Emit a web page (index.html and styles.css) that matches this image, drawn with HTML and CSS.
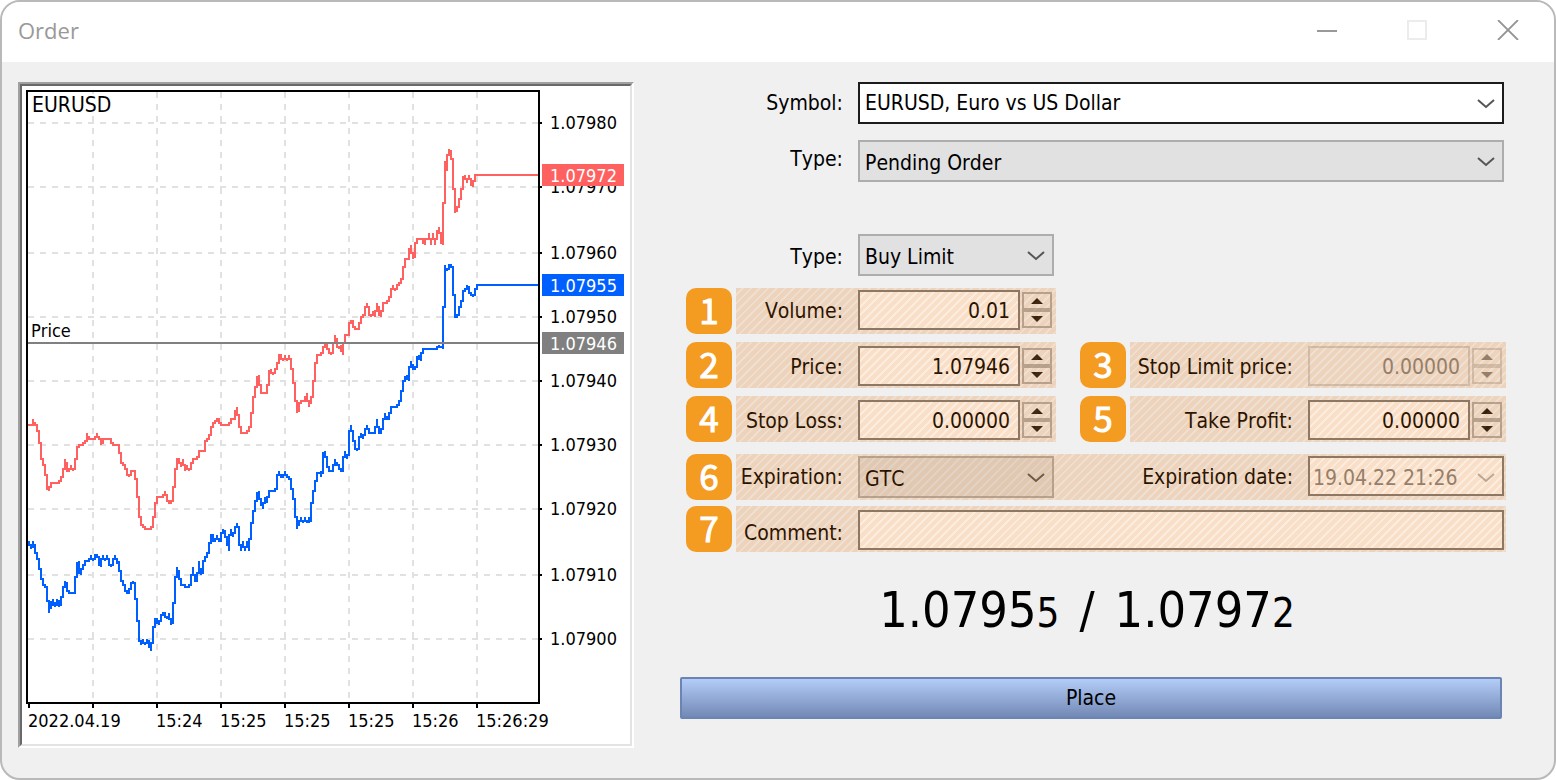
FILE: index.html
```html
<!DOCTYPE html>
<html lang="en">
<head>
<meta charset="utf-8">
<title>Order</title>
<link rel="stylesheet" href="styles.css">
</head>
<body>
<div class="window">
  <header class="titlebar">
    <h1 class="title">Order</h1>
    <div class="window-buttons">
      <button type="button" class="window-button" aria-label="Minimize"><svg width="20" height="20" viewBox="0 0 20 20"><path d="M0 11H20" stroke="#999" stroke-width="2"/></svg></button>
      <button type="button" class="window-button" aria-label="Maximize" disabled><svg width="20" height="20" viewBox="0 0 20 20"><rect x="1" y="1" width="18" height="18" fill="none" stroke="#ececec" stroke-width="2"/></svg></button>
      <button type="button" class="window-button" aria-label="Close"><svg width="22" height="20" viewBox="0 0 22 20"><path d="M1 0L21 20M21 0L1 20" stroke="#959595" stroke-width="1.8"/></svg></button>
    </div>
  </header>
  <main class="content">
    <section class="chart-panel" aria-label="EURUSD tick chart">
      <svg class="chart" width="608" height="658" viewBox="22 86 608 658">
        <g class="grid">
          <path d="M93 92V702M157 92V702M221 92V702M285 92V702M349 92V702M413 92V702M477 92V702"/>
          <path d="M28 123H538M28 187H538M28 253H538M28 317H538M28 381H538M28 445H538M28 509H538M28 575H538M28 639H538"/>
        </g>
        <rect x="31" y="94" width="80" height="21" fill="#fff"/>
        <!-- Series use three units per pixel -->
        <svg x="0" y="0" width="640" height="744" viewBox="0 0 1920 2232">
          <g class="series bid">
            <polyline transform="translate(30 1140)" points="54,488 57,482 57,495 60,495 63,507 66,490 69,482 72,498 75,500 75,514 81,516 81,532 87,538 87,564 93,566 93,592 99,596 99,608 105,612 105,620 111,622 111,658 117,662 117,700 120,660 123,688 126,664 129,656 132,680 135,680 138,668 141,656 144,668 147,682 150,664 153,650 159,648 159,618 165,616 165,602 171,612 171,626 177,630 177,638 189,638 195,630 195,590 201,588 201,552 207,542 207,570 213,586 213,566 219,566 219,554 225,552 225,542 237,542 243,524 249,542 255,524 261,524 264,536 267,546 273,562 273,542 279,524 285,542 291,524 297,542 303,560 309,542 315,524 321,548 327,542 327,570 333,574 333,603 339,605 345,622 351,638 357,638 363,612 369,602 375,614 375,654 381,656 381,718 387,722 387,778 393,780 393,796 399,778 405,796 411,776 414,788 417,788 423,815 423,790 429,780 429,740 435,738 435,716 441,718 447,736 453,710 459,698 465,698 471,718 477,698 483,736 489,722 489,668 495,664 495,592 501,590 501,560 507,576 507,592 513,602 525,618 531,622 537,620 543,610 543,584 549,582 549,560 555,604 561,594 561,578 567,574 567,542 573,586 579,566 579,544 585,542 585,530 591,526 591,516 597,514 597,486 603,484 603,464 609,464 609,482 615,482 621,464 627,484 633,484"/>
            <polyline transform="translate(660 960)" points="3,664 3,642 9,626 15,640 21,656 27,690 27,656 33,628 39,648 45,628 51,608 57,632 57,656 63,690 69,662 75,690 81,662 87,690 87,656 93,652 93,606 99,604 99,572 105,570 105,540 111,538 111,524 117,512 117,532 123,540 129,568 135,530 141,550 147,514 165,514 171,496 171,470 177,452 183,470 189,470 195,452 201,470 207,472 213,482 213,502 219,506 219,530 225,534 225,586 231,590 231,628 237,600 237,616 243,590 249,610 255,590 261,606 267,590 267,610 273,588 273,546 279,544 279,512 285,510 285,482 291,478 291,462 303,452 303,472 309,440 309,404 315,392 315,408 321,410 321,436 327,438 327,454 339,454 345,416 351,434 357,436 363,452 369,454 369,422 375,392 381,416 387,394 387,344 393,314 393,334 399,334 399,356 405,360 405,382 411,394 417,380 417,356 423,338 429,356 435,332 441,316 447,338 465,338 471,296 477,340 483,338 489,312 495,278 501,296 507,296 513,262 531,262 537,244 543,242 543,212 549,208 549,182"/>
            <polyline transform="translate(1080 390)" points="129,780 129,752 135,744 141,734 147,754 147,720 153,690 159,716 165,716 171,700 171,684 177,676 183,694 183,674 189,656 231,656 237,644 249,658 249,528 255,524 255,404 261,424 267,404 273,404 279,414 279,490 285,492 285,562 291,562 297,548 297,530 303,526 303,510 309,508 309,484 315,480 318,464 324,468 327,482 333,488 339,500 345,484 351,465 534,465"/>
          </g>
          <g class="series ask">
            <polyline transform="translate(30 1140)" points="54,134 66,134 69,116 72,134 78,134 81,150 87,150 87,186 93,188 93,235 99,237 99,255 105,257 105,282 111,284 111,320 117,333 120,309 147,309 150,291 159,291 159,264 165,262 165,236 168,255 171,270 177,270 183,255 189,272 195,262 195,237 201,235 201,205 207,195 219,195 222,185 228,176 231,158 237,176 255,176 261,158 264,174 270,176 273,193 279,176 303,176 309,194 327,194 327,214 333,216 333,245 339,250 345,262 351,272 357,290 363,272 375,272 375,292 381,295 381,348 387,350 387,408 393,410 393,428 399,432 405,446 423,446 429,434 429,408 435,405 435,366 441,366 441,351 459,351 465,333 471,350 477,368 483,368 489,358 489,320 495,316 495,265 501,263 501,237 507,237 513,260 519,237 525,272 531,255 537,272 543,255 549,237 558,237 564,220 567,212 585,212 585,182 591,178 597,176 597,166 603,164 603,145 609,136 615,125 621,118 627,118 633,134"/>
            <polyline transform="translate(660 960)" points="0,314 27,314 33,297 45,297 45,280 51,260 51,282 57,284 57,316 63,320 63,339 81,339 87,318 93,314 93,280 99,276 99,230 105,228 105,200 111,196 111,176 117,164 117,190 123,194 123,210 129,218 141,218 141,194 147,190 147,158 153,147 159,164 165,148 171,146 171,128 177,122 177,104 183,104 189,123 195,104 201,123 207,104 213,120 213,142 219,144 219,182 225,186 225,240 231,244 231,280 237,264 237,254 243,243 255,243 261,218 267,262 273,236 279,218 279,182 285,178 285,128 291,124 291,104 303,104 309,88 315,74 321,74 327,92 333,106 339,94 345,42 351,68 357,86 363,74 369,104 369,70 375,64 375,44 387,42 387,8 393,2 399,2 399,14 405,26 417,26 417,6 420,4"/>
            <polyline transform="translate(1080 390)" points="0,574 3,558 9,558 15,540 21,518 27,540 33,560 39,540 45,560 51,518 57,540 63,560 69,520 81,518 87,504 93,486 99,464 105,482 111,466 117,464 123,444 129,438 129,412 135,408 135,388 147,386 147,368 153,344 159,386 165,374 165,350 171,326 189,326 195,344 207,308 213,344 219,308 225,344 231,308 237,290 243,324 249,346 249,216 255,214 255,90 261,120 261,88 267,56 273,70 273,84 279,86 279,174 285,176 285,250 291,236 297,222 297,206 303,202 303,176 309,172 309,144 315,134 321,158 327,134 333,156 339,172 345,134 534,134"/>
          </g>
        </svg>
        <path d="M28 343H538" class="price-line"/>
        <path class="frame" d="M27 91H539V703H27ZM540 123H542M540 187H542M540 253H542M540 317H542M540 381H542M540 445H542M540 509H542M540 575H542M540 639H542M29 704V708M93 704V708M157 704V708M221 704V708M285 704V708M349 704V708M413 704V708M477 704V708"/>
        <text class="pair" x="32" y="112">EURUSD</text>
        <text x="31" y="337">Price</text>
        <g>
          <text x="550" y="129">1.07980</text>
          <text x="550" y="193">1.07970</text>
          <text x="550" y="259">1.07960</text>
          <text x="550" y="323">1.07950</text>
          <text x="550" y="387">1.07940</text>
          <text x="550" y="451">1.07930</text>
          <text x="550" y="515">1.07920</text>
          <text x="550" y="581">1.07910</text>
          <text x="550" y="645">1.07900</text>
        </g>
        <g>
          <text x="28" y="727">2022.04.19</text>
          <text x="156" y="727">15:24</text>
          <text x="220" y="727">15:25</text>
          <text x="284" y="727">15:25</text>
          <text x="348" y="727">15:25</text>
          <text x="412" y="727">15:26</text>
          <text x="476" y="727">15:26:29</text>
        </g>
        <g class="tags">
          <rect x="542" y="164" width="82" height="22" fill="#ff6060"/>
          <rect x="542" y="274" width="82" height="22" fill="#0060ff"/>
          <rect x="542" y="332" width="82" height="22" fill="#808080"/>
          <text x="550" y="182">1.07972</text>
          <text x="550" y="292">1.07955</text>
          <text x="550" y="350">1.07946</text>
        </g>
      </svg>
    </section>

    <form class="order">
      <div class="row plain">
        <label class="label" for="symbol">Symbol:</label>
        <div class="select wide">
          <select id="symbol" class="control focused"><option>EURUSD, Euro vs US Dollar</option></select>
          <svg class="chevron" width="18" height="10" viewBox="0 0 18 10"><path d="M1 1L9 8L17 1"/></svg>
        </div>
      </div>
      <div class="row plain order-type">
        <label class="label raised" for="order-type">Type:</label>
        <div class="select wide">
          <select id="order-type" class="control"><option>Pending Order</option></select>
          <svg class="chevron" width="18" height="10" viewBox="0 0 18 10"><path d="M1 1L9 8L17 1"/></svg>
        </div>
      </div>
      <div class="row plain pending-type">
        <label class="label" for="pending-type">Type:</label>
        <div class="select">
          <select id="pending-type" class="control"><option>Buy Limit</option></select>
          <svg class="chevron" width="18" height="10" viewBox="0 0 18 10"><path d="M1 1L9 8L17 1"/></svg>
        </div>
      </div>

      <div class="row volume">
        <span class="badge">1</span>
        <div class="band">
          <label class="label" for="volume">Volume:</label>
          <input id="volume" class="number" type="text" value="0.01">
          <div class="spinner">
            <button type="button" class="step" aria-label="Increase volume"><svg width="12" height="6" viewBox="0 0 12 6"><path d="M6 0L12 6H0Z"/></svg></button>
            <button type="button" class="step" aria-label="Decrease volume"><svg width="12" height="6" viewBox="0 0 12 6"><path d="M0 0H12L6 6Z"/></svg></button>
          </div>
        </div>
      </div>

      <div class="row">
        <span class="badge">2</span>
        <div class="band low">
          <label class="label" for="price">Price:</label>
          <input id="price" class="number" type="text" value="1.07946">
          <div class="spinner">
            <button type="button" class="step" aria-label="Increase price"><svg width="12" height="6" viewBox="0 0 12 6"><path d="M6 0L12 6H0Z"/></svg></button>
            <button type="button" class="step" aria-label="Decrease price"><svg width="12" height="6" viewBox="0 0 12 6"><path d="M0 0H12L6 6Z"/></svg></button>
          </div>
        </div>
        <span class="badge second">3</span>
        <div class="band fill low">
          <label class="label grow" for="stop-limit">Stop Limit price:</label>
          <input id="stop-limit" class="number" type="text" value="0.00000" disabled>
          <div class="spinner">
            <button type="button" class="step" aria-label="Increase stop limit price" disabled><svg width="12" height="6" viewBox="0 0 12 6"><path d="M6 0L12 6H0Z"/></svg></button>
            <button type="button" class="step" aria-label="Decrease stop limit price" disabled><svg width="12" height="6" viewBox="0 0 12 6"><path d="M0 0H12L6 6Z"/></svg></button>
          </div>
        </div>
      </div>

      <div class="row">
        <span class="badge">4</span>
        <div class="band low">
          <label class="label" for="stop-loss">Stop Loss:</label>
          <input id="stop-loss" class="number" type="text" value="0.00000">
          <div class="spinner">
            <button type="button" class="step" aria-label="Increase stop loss"><svg width="12" height="6" viewBox="0 0 12 6"><path d="M6 0L12 6H0Z"/></svg></button>
            <button type="button" class="step" aria-label="Decrease stop loss"><svg width="12" height="6" viewBox="0 0 12 6"><path d="M0 0H12L6 6Z"/></svg></button>
          </div>
        </div>
        <span class="badge second">5</span>
        <div class="band fill low">
          <label class="label grow" for="take-profit">Take Profit:</label>
          <input id="take-profit" class="number" type="text" value="0.00000">
          <div class="spinner">
            <button type="button" class="step" aria-label="Increase take profit"><svg width="12" height="6" viewBox="0 0 12 6"><path d="M6 0L12 6H0Z"/></svg></button>
            <button type="button" class="step" aria-label="Decrease take profit"><svg width="12" height="6" viewBox="0 0 12 6"><path d="M0 0H12L6 6Z"/></svg></button>
          </div>
        </div>
      </div>

      <div class="row expiry">
        <span class="badge">6</span>
        <div class="band fill">
          <label class="label" for="expiration">Expiration:</label>
          <div class="select">
            <select id="expiration" class="control"><option>GTC</option></select>
            <svg class="chevron" width="18" height="10" viewBox="0 0 18 10"><path d="M1 1L9 8L17 1"/></svg>
          </div>
          <label class="label grow" for="expiration-date">Expiration date:</label>
          <div class="select date">
            <select id="expiration-date" class="control" disabled><option>19.04.22 21:26</option></select>
            <svg class="chevron" width="18" height="10" viewBox="0 0 18 10"><path d="M1 1L9 8L17 1"/></svg>
          </div>
        </div>
      </div>

      <div class="row comment">
        <span class="badge">7</span>
        <div class="band fill low">
          <label class="label" for="comment">Comment:</label>
          <input id="comment" class="text" type="text">
        </div>
      </div>

      <p class="quote"><span>1.0795<span class="pip">5</span></span> <span>/</span> <span>1.0797<span class="pip">2</span></span></p>
      <button type="submit" class="place">Place</button>
    </form>
  </main>
</div>
<script src="chart.js"></script>
</body>
</html>
```
FILE: styles.css
```css
* {
  box-sizing: border-box;
}

body {
  margin: 0;
  background: #fff;
  color: #000;
  font: 21px/26px "DejaVu Sans Condensed", "DejaVu Sans", sans-serif;
  font-kerning: none;
}

button,
input,
select {
  margin: 0;
  font: inherit;
  color: inherit;
  border-radius: 0;
}

.window {
  min-height: 100vh;
  border: 2px solid #b9b9b9;
  border-radius: 20px;
  overflow: hidden;
  background: #f0f0f0;
}

.titlebar {
  display: flex;
  align-items: center;
  justify-content: space-between;
  height: 60px;
  padding: 0 35px 4px 16px;
  background: #fff;
}

.title {
  margin: 0;
  font: 400 22px/32px "Open Sans", "Noto Sans", sans-serif;
  color: #999;
}

.window-buttons {
  display: flex;
  align-items: center;
  gap: 70px;
}

.window-button {
  display: flex;
  padding: 0;
  border: 0;
  background: none;
}

.content {
  display: flex;
  align-items: flex-start;
  gap: 46px;
  padding: 20px 48px 20px 16px;
}

.chart-panel {
  flex: none;
  border: 2px solid;
  border-color: #a0a0a0 #fff #fff #a0a0a0;
}

.chart {
  display: block;
  box-sizing: content-box;
  border: 2px solid;
  border-color: #696969 #e3e3e3 #e3e3e3 #696969;
  background: #fff;
  font-size: 18px;
}

.grid path {
  fill: none;
  stroke: #e1e1e1;
  stroke-width: 2;
  stroke-dasharray: 6 6;
}

.series {
  fill: none;
  stroke-width: 6;
  stroke-linecap: square;
  shape-rendering: crispEdges;
}

.bid {
  stroke: #0060ff;
}

.ask {
  stroke: #ff6060;
}

.price-line {
  stroke: #808080;
  stroke-width: 2;
}

.frame {
  fill: none;
  stroke: #000;
  stroke-width: 2;
}

.pair {
  font-size: 21px;
}

.tags text {
  fill: #fff;
}

.order {
  flex: 1;
  display: flex;
  flex-direction: column;
}

.row {
  display: flex;
  gap: 4px;
  margin-bottom: 8px;
  padding-left: 6px;
}

.plain {
  gap: 0;
  margin-bottom: 16px;
  padding-left: 56px;
  padding-right: 2px;
}

.order-type {
  margin-bottom: 52px;
}

.pending-type {
  margin-bottom: 12px;
}

.expiry {
  margin-top: 4px;
  margin-bottom: 6px;
}

.badge {
  display: flex;
  flex: none;
  align-items: center;
  justify-content: center;
  width: 46px;
  height: 46px;
  padding-bottom: 4px;
  border-radius: 10px;
  background: #f49b22;
  color: #fff;
  font: 400 35px/40px "Noto Sans CJK JP", "Noto Sans", sans-serif;
  -webkit-text-stroke: 1px #fff;
}

.second {
  margin-left: 20px;
}

.band {
  position: relative;
  display: flex;
  align-items: flex-start;
  width: 320px;
  height: 46px;
  padding-top: 2px;
}

.low {
  padding-top: 4px;
}

.band::after {
  content: "";
  position: absolute;
  inset: 0;
  pointer-events: none;
  background: repeating-linear-gradient(135deg, rgba(227, 109, 0, 0.22) 0 4px, rgba(227, 109, 0, 0.13) 4px 6px);
}

.fill {
  flex: 1;
  width: auto;
}

.label {
  flex: none;
  width: 122px;
  padding: 8px 15px 6px 0;
  text-align: right;
  white-space: nowrap;
}

.raised {
  padding-top: 6px;
}

.pending-type .label,
.comment .label {
  padding-top: 10px;
}

.grow {
  flex: 1;
}

.select {
  position: relative;
  flex: none;
  width: 196px;
}

.wide {
  flex: 1;
}

.control {
  appearance: none;
  display: block;
  width: 100%;
  height: 42px;
  padding: 3px 40px 0 5px;
  border: 2px solid #adadad;
  background: #e1e1e1;
  opacity: 1;
}

.focused {
  padding-top: 0;
  border-color: #1c1c1c;
  background: #fff;
}

.chevron {
  position: absolute;
  top: 17px;
  right: 9px;
  fill: none;
  stroke: #555;
  stroke-width: 2;
  pointer-events: none;
}

.date {
  margin-right: 2px;
}

.date .control {
  height: 40px;
  padding-left: 3px;
  padding-right: 20px;
  border-color: #7a7a7a;
  background: #fff;
  color: #838383;
}

.date .chevron {
  stroke: #b4b4b4;
}

.number,
.text {
  width: 162px;
  height: 40px;
  padding: 0 8px;
  border: 2px solid #7a7a7a;
  background: #fff;
}

.number {
  padding-top: 2px;
  text-align: right;
}

.number:disabled {
  border-color: #ccc;
  background: #f0f0f0;
  color: #838383;
}

.text {
  flex: 1;
  margin-right: 2px;
}

.spinner {
  display: flex;
  flex-direction: column;
  margin: 2px 4px 0 2px;
}

.step {
  display: flex;
  align-items: center;
  justify-content: center;
  width: 30px;
  height: 18px;
  padding: 0;
  border: 2px solid #adadad;
  background: #f0f0f0;
}

.step svg {
  fill: #151515;
}

.step:disabled {
  border-color: #ccc;
}

.step:disabled svg {
  fill: #838383;
}

.quote {
  display: flex;
  align-items: baseline;
  justify-content: center;
  gap: 20px;
  margin: 18px 0 0;
  padding-right: 12px;
  font-size: 50px;
  line-height: 64px;
}

.pip {
  font-size: 40px;
}

.place {
  height: 42px;
  margin: 32px 4px 0 0;
  border: 2px solid #6a84b4;
  border-radius: 2px;
  background: linear-gradient(#b4ccf8, #7289b6);
}
```
FILE: chart.js
```js
// Redraws each tick series as stepped two-pixel columns.
const CELL = 6;
const snap = (value) => Math.floor(value / CELL) * CELL + CELL / 2;

for (const line of document.querySelectorAll(".series polyline")) {
  const points = Array.from(line.points, (p) => [snap(p.x), snap(p.y)]);
  let d = `M${points[0][0]} ${points[0][1]}`;
  for (let i = 1; i < points.length; i++) {
    const [x, y] = points[i];
    const middle = snap((points[i - 1][1] + y) / 2);
    d += `V${middle}H${x}V${y}`;
  }
  const path = document.createElementNS("http://www.w3.org/2000/svg", "path");
  path.setAttribute("d", d);
  path.setAttribute("transform", line.getAttribute("transform"));
  line.replaceWith(path);
}
```
